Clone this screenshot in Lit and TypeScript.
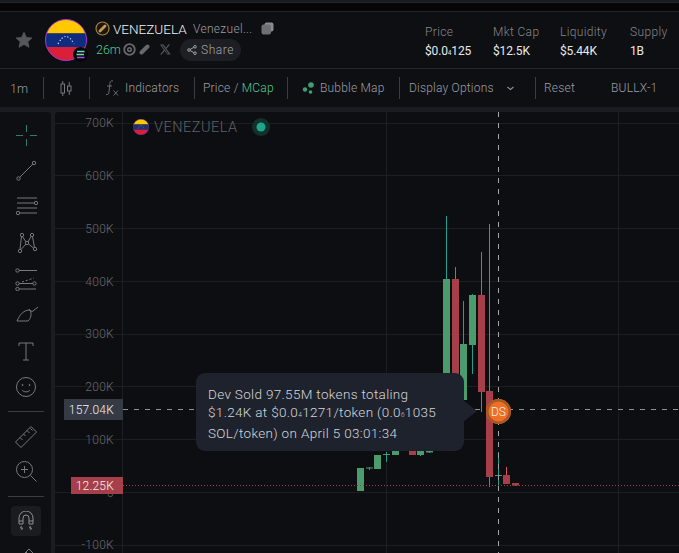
import { LitElement, html, css, svg } from "lit";
import { customElement } from "lit/decorators.js";

const GRID_Y = [123.5, 175.5, 228.5, 281.5, 334.5, 386.5, 439.5, 492.5, 545.5];
const GRID_X = [122.5, 386.5, 618.5];
const LABELS: [string, number][] = [["700K", 122], ["600K", 175], ["500K", 228], ["400K", 281], ["300K", 333], ["200K", 386], ["100K", 439], ["0", 492], ["-100K", 544]];
// x, top, bottom, wickTop, wickBottom, up
const CANDLES: [number, number, number, number, number, boolean][] = [
  [357, 468, 491, 468, 491, true],
  [366, 467.5, 468.5, 467, 470, true],
  [374, 455, 469, 455, 469, true],
  [383, 454, 455, 452, 462, true],
  [392, 450, 455, 449, 455, true],
  [409, 451, 455, 450, 455, false],
  [417, 451, 455, 450, 456, true],
  [426, 450, 452.5, 450, 453, true],
  [443, 279, 450, 216, 451, true],
  [452, 279, 450, 267, 451, false],
  [460, 344, 400, 301, 402, true],
  [469, 295, 345, 294, 374, true],
  [478, 295, 392, 252, 412, false],
  [486, 391, 477, 224, 487, false],
  [495, 475, 476, 452, 486, true],
  [503, 475, 484, 467, 484, false],
  [512, 483, 485.5, 483, 486, false],
];

const IC = "#77797e";

@customElement("app-root")
export class AppRoot extends LitElement {
  static styles = css`
    :host { display: block; width: 679px; height: 553px; overflow: hidden; background: #1b1c21; font-family: Roboto, "Liberation Sans", sans-serif; font-weight: 300; color: #a9abb0; font-size: 12px; }
    .strip { height: 8px; margin-top: 2px; background: #060608; border-top: 1px solid #25262b; border-bottom: 1px solid #25262b; }
    .head { height: 56px; background: #0e0f12; border-bottom: 1px solid #25262b; display: flex; align-items: center; }
    .star { width: 45px; display: flex; justify-content: center; padding-left: 3px; box-sizing: border-box; }
    .avatar { position: relative; width: 42px; height: 42px; margin-right: 8px; }
    .sol { position: absolute; right: -1px; bottom: -1px; width: 15px; height: 15px; }
    .info { width: 330px; display: flex; flex-direction: column; gap: 1px; }
    .r1, .r2 { display: flex; align-items: center; }
    .r1 { height: 18px; }
    .r2 { height: 22px; }
    .sym { color: #f2f3f4; font-size: 13.5px; margin: 0 5px 0 3px; width: 75px; white-space: nowrap; }
    .nm { color: #9b9da2; font-size: 12px; letter-spacing: .3px; width: 68px; white-space: nowrap; }
    .age { color: #55c98d; font-size: 12.5px; margin: 0 4px 0 1px; width: 23px; }
    .share { margin-left: 9px; height: 22px; width: 61px; border-radius: 11px; background: #1d1f24; display: flex; align-items: center; justify-content: center; gap: 4px; color: #a2a4a8; font-size: 12px; letter-spacing: .5px; }
    .stats { display: grid; grid-template-columns: 68px 67px 70px auto; row-gap: 5px; padding-top: 4px; }
    .stats span { font-size: 12px; letter-spacing: .35px; color: #85878c; line-height: 14px; }
    .stats b { font-weight: 400; font-size: 12px; letter-spacing: -.15px; color: #e8e9ea; line-height: 14px; }
    small { font-size: 6.5px; }
    .tools { height: 38px; background: #0e0f12; display: grid; grid-template-columns: 43px 46px 105px 93px 112px 136px 144px; align-items: center; color: #9c9ea3; font-size: 12px; letter-spacing: .2px; }
    .cell { height: 22px; display: flex; align-items: center; border-left: 1px solid #3a3c42; box-sizing: border-box; white-space: nowrap; }
    .cell:first-child { border: 0; padding-left: 10px; font-size: 12.5px; letter-spacing: 0; }
    .c2 { padding-left: 16px; }
    .c3 { padding-left: 15px; gap: 6px; }
    .c4 { padding-left: 8px; }
    .c5 { padding-left: 14px; gap: 5px; }
    .c6 { padding-left: 9px; }
    .c7 { padding-left: 8px; }
    .c6 svg { margin-left: 13px; }
    .c7 span { margin-left: 36px; }
    .mcap { color: #55c98d; }
    .main { display: flex; gap: 4px; height: 441px; margin-top: 5px; }
    .side { width: 51px; flex: none; background: #0e0f12; overflow: hidden; padding-top: 5px; box-sizing: border-box; border-radius: 0 4px 0 0; display: flex; flex-direction: column; align-items: center; }
    .btn { height: 36px; width: 36px; flex: none; display: flex; align-items: center; justify-content: center; }
    .btn.tight { height: 34px; }
    .sep { width: 36px; height: 1px; flex: none; background: #3b3d42; margin-top: 6px; margin-bottom: 8px; }
    .sep.b { margin-top: 8px; margin-bottom: 9px; }
    .btn.mag { width: 30px; height: 30px; border-radius: 4px; background: #1a1c20; }
    .chart { position: relative; flex: 1; background: #0d0e11; overflow: hidden; border-radius: 4px 0 0 0; }
    .plot { position: absolute; left: -55px; top: -112px; width: 679px; height: 553px; }
    .ax { position: absolute; right: 565px; font-size: 12px; letter-spacing: .3px; color: #66686e; line-height: 14px; transform: translateY(-6px); }
    .tag { position: absolute; height: 17px; display: flex; align-items: center; justify-content: flex-end; padding-right: 9px; box-sizing: border-box; color: #f2f3f4; font-size: 12px; letter-spacing: .2px; }
    .tag.cur { left: 9px; top: 287px; width: 59px; height: 21px; background: #363a45; }
    .tag.low { left: 16px; top: 365px; width: 52px; background: #a63f49; }
    .legend { position: absolute; left: 78px; top: 6px; display: flex; align-items: center; color: #5f6168; font-size: 14.5px; letter-spacing: .5px; }
    .legend svg { margin-right: 5px; }
    .legend .dot { margin: 0 0 0 14px; }
    .tip { position: absolute; left: 141px; top: 261px; width: 268px; height: 78px; box-sizing: border-box; padding: 12px 12px; border-radius: 9px; background: #1e222d; color: #d4d6da; font-size: 13.5px; line-height: 18px; letter-spacing: .33px; white-space: nowrap; }
    .tip::after { content: ""; position: absolute; left: 267px; top: 27px; border-style: solid; border-width: 11px 0 11px 14px; border-color: transparent transparent transparent #1e222d; }
    .ds { position: absolute; left: 431px; top: 287px; width: 25px; height: 25px; border-radius: 50%; background: #ee6f28; box-shadow: inset 0 0 0 2.5px #a8571f; display: flex; align-items: center; justify-content: center; color: #f7efe9; font-size: 12px; }
  `;

  private flag(size: number, bar = "#0f2c80") {
    return html`<svg width=${size} height=${size} viewBox="0 0 42 42">
      <defs><clipPath id="fc"><circle cx="21" cy="21" r="20.5"/></clipPath></defs>
      <g clip-path="url(#fc)">
        <rect width="42" height="14.5" fill="#ffc800"/>
        <rect y="14.5" width="42" height="14" fill=${bar}/>
        <rect y="28" width="42" height="14" fill="#d91f3a"/>
      </g>
      <path d="M13 25 Q21 10 29 25" fill="none" stroke="#dfe3ee" stroke-width="1.2" stroke-dasharray="1.2 2"/>
      <circle cx="21" cy="21" r="20.5" fill="none" stroke="#a03ad0" stroke-width="1"/>
    </svg>`;
  }

  private chartSvg() {
    return svg`
      ${GRID_Y.map((y) => svg`<line x1="55" x2="679" y1=${y} y2=${y} stroke="#1d1e22"/>`)}
      ${GRID_X.map((x) => svg`<line x1=${x} x2=${x} y1="112" y2="553" stroke="#1d1e22"/>`)}
      ${CANDLES.map(([x, t, b, wt, wb, up]) => svg`
        <line x1=${x + 3.5} x2=${x + 3.5} y1=${wt} y2=${wb} stroke=${up ? "#1f9f8d" : "#d9534f"}/>
        <rect x=${x} y=${t} width="7" height=${b - t} fill=${up ? "#4a9c6d" : "#a63f49"}/>`)}
      <line x1="123" x2="679" y1="485.5" y2="485.5" stroke="#a63f49" stroke-dasharray="1 2"/>
      <line x1="123" x2="679" y1="409.5" y2="409.5" stroke="#8f9298" stroke-dasharray="5 6"/>
      <line x1="498.5" x2="498.5" y1="112" y2="553" stroke="#a4a6ab" stroke-dasharray="5 6"/>
    `;
  }

  render() {
    const sideIcons = [
      html`<svg width="24" height="24" viewBox="0 0 24 24" stroke="#2f7f63" fill="none"><path d="M12.500 2v7M12.500 16v7M2 12.500h7M16 12.500h7"/></svg>`,
      html`<svg width="24" height="24" viewBox="0 0 24 24" stroke=${IC} fill="none"><circle cx="4.500" cy="19.500" r="1.700"/><circle cx="20" cy="4" r="1.700"/><path d="M5.700 18.300 18.800 5.200"/></svg>`,
      html`<svg width="24" height="24" viewBox="0 0 24 24" stroke=${IC} fill="none"><path d="M3 3h20M3 8h18M3 13h20M6 18h17"/><circle cx="22" cy="8" r="1.700"/><circle cx="4" cy="18" r="1.700"/></svg>`,
      html`<svg width="24" height="24" viewBox="0 0 24 24" stroke=${IC} fill="none"><circle cx="8" cy="4" r="1.700"/><circle cx="18" cy="4" r="1.700"/><circle cx="13" cy="12" r="1.700"/><circle cx="6" cy="20" r="1.700"/><circle cx="21" cy="18" r="1.700"/><path d="M8.500 5.500 12 11M17 5.500 14 11M7 18.500 12 13M19.500 17 14.500 13M7.500 5.500 6 18M18.500 5.500 20.500 16.500"/></svg>`,
      html`<svg width="24" height="24" viewBox="0 0 24 24" stroke=${IC} fill="none"><path d="M5 3.500h18M5 16.500h14M5 22h17"/><path d="M8 15l12-4" stroke-dasharray="2 2"/><circle cx="3.500" cy="3.500" r="1.700"/><circle cx="3.500" cy="16.500" r="1.700"/><circle cx="3.500" cy="22" r="1.700"/><circle cx="20.500" cy="16.500" r="1.700"/></svg>`,
      html`<svg width="24" height="24" viewBox="0 0 24 24" stroke=${IC} fill="none"><path d="M3 18 L14 18 C17 15 18 11 16 7 C10 7 6 11 3 18zM15 6C16 8 18 9 19 8L24 4"/></svg>`,
      html`<svg width="24" height="24" viewBox="0 0 24 24" stroke=${IC} fill="none"><path d="M5 7V4h14v3M12 4v17M9 21h6"/></svg>`,
      html`<svg width="24" height="24" viewBox="0 0 24 24" stroke=${IC} fill="none"><circle cx="12" cy="12" r="9.500"/><circle cx="8.500" cy="10" r=".6"/><circle cx="15.500" cy="10" r=".6"/><path d="M8 15c2 2.500 6 2.500 8 0"/></svg>`,
    ];
    return html`
      <div class="strip"></div>
      <div class="head">
        <div class="star"><svg width="18" height="18" viewBox="0 0 24 24" fill="#55575c" stroke="#55575c" stroke-linejoin="round"><path d="M12 1.500l3.200 7 7.500.8-5.600 5 1.600 7.500L12 18l-6.700 3.800 1.600-7.500-5.600-5 7.500-.8z"/></svg></div>
        <div class="avatar">
          ${this.flag(42)}
          <svg class="sol" viewBox="0 0 15 15"><circle cx="7.500" cy="7.500" r="7.500" fill="#07070a"/><path d="M4 4.500h7.500M3.500 7.500H11" stroke="#6fd6b8" stroke-width="1.500"/><path d="M4 10.500h7.500" stroke="#a04fe8" stroke-width="1.500"/></svg>
        </div>
        <div class="info">
          <div class="r1">
            <svg width="15" height="15" viewBox="0 0 15 15"><circle cx="7.500" cy="7.500" r="6.500" fill="#1c160c" stroke="#a8823f" stroke-width="1.200"/><path d="M5 10l5-5" stroke="#c49a50" stroke-width="2.800" stroke-linecap="round"/></svg>
            <span class="sym">VENEZUELA</span>
            <span class="nm">Venezuel...</span>
            <svg width="13" height="13" viewBox="0 0 13 13" fill="#6d6f74"><rect x="3.500" y="0.500" width="9" height="9" rx="2" fill="#8a8c90"/><rect x="0.500" y="2.500" width="9.500" height="10" rx="2"/></svg>
          </div>
          <div class="r2">
            <span class="age">26m</span>
            <svg width="13" height="13" viewBox="0 0 13 13" fill="none" stroke="#66686d"><circle cx="6.500" cy="6.500" r="5.300" stroke-width="1.800"/><circle cx="6.500" cy="6.500" r="1.800" stroke-width="1.500"/></svg>
            <svg style="margin-left:3px" width="11" height="11" viewBox="0 0 11 11"><path d="M2.500 8.500l6-6" stroke="#66686d" stroke-width="4" stroke-linecap="round"/></svg>
            <svg style="margin-left:10px" width="11" height="11" viewBox="0 0 24 24" fill="#55575c"><path d="M18 1h4l-8 9.500L23.500 23H16l-5.800-7.600L3.500 23H0l8.500-10L0 1h7.700l5.200 7zM16.700 21h2L6.300 3H4.200z"/></svg>
            <div class="share">
              <svg width="10" height="10" viewBox="0 0 10 10" fill="none" stroke="#a2a4a8"><circle cx="2" cy="5" r="1.300"/><circle cx="8" cy="1.800" r="1.300"/><circle cx="8" cy="8.200" r="1.300"/><path d="M3.200 4.400 6.800 2.400M3.200 5.600l3.600 2"/></svg>
              Share
            </div>
          </div>
        </div>
        <div class="stats">
          <span>Price</span><span>Mkt Cap</span><span>Liquidity</span><span>Supply</span>
          <b>$0.0<small>4</small>125</b><b>$12.5K</b><b>$5.44K</b><b>1B</b>
        </div>
      </div>
      <div class="tools">
        <div class="cell">1m</div>
        <div class="cell c2"><svg width="12" height="15" viewBox="0 0 12 15" fill="none" stroke=${IC}><rect x="1" y="3" width="3.500" height="9"/><path d="M2.750 0v3M2.750 12v3"/><rect x="7.500" y="5" width="3.500" height="5"/><path d="M9.250 1v4M9.250 10v4"/></svg></div>
        <div class="cell c3"><svg width="14" height="16" viewBox="0 0 14 16" fill="none" stroke="#6a6c72"><path d="M8 1C5 0 5 3 4.800 5L4 12c-.2 2-1.500 3-3 2.500M2 6h5M8.500 10.500l4.500 5M13 10.500l-4.500 5"/></svg><span>Indicators</span></div>
        <div class="cell c4">Price /&nbsp;<span class="mcap">MCap</span></div>
        <div class="cell c5"><svg width="13" height="12" viewBox="0 0 13 12" fill="#3f9f74"><circle cx="3" cy="7.500" r="2.200"/><circle cx="9" cy="3" r="2.800"/><circle cx="8.500" cy="10" r="1.800"/></svg><span>Bubble Map</span></div>
        <div class="cell c6">Display Options<svg width="7" height="5" viewBox="0 0 7 5" fill="none" stroke="#8c8e93" stroke-width="1.200"><path d="M.5 1l3 2.500 3-2.500"/></svg></div>
        <div class="cell c7">Reset<span>BULLX-1</span></div>
      </div>
      <div class="main">
        <div class="side">
          ${sideIcons.map((i) => html`<div class="btn">${i}</div>`)}
          <div class="sep"></div>
          <div class="btn tight"><svg width="24" height="24" viewBox="0 0 24 24" stroke=${IC} fill="none"><path d="M1.500 17 17 1.500 22.500 7 7 22.500zM6 12.500l2.500 2.500M9.500 9l2 2M13 5.500l2.500 2.500M16.500 3.500l2 2"/></svg></div>
          <div class="btn tight"><svg width="24" height="24" viewBox="0 0 24 24" stroke=${IC} fill="none"><circle cx="10.500" cy="10.500" r="8"/><path d="M16.500 16.500l6 6M10.500 7v7M7 10.500h7"/></svg></div>
          <div class="sep b"></div>
          <div class="btn mag"><svg width="16" height="20" viewBox="0 0 16 20" stroke="#8c8e93" fill="none"><path d="M1 13V7a7 7 0 0 1 14 0v6h-4V7a3 3 0 0 0-6 0v6zM1 10h4M11 10h4"/><path d="M3.500 15l-1 2h2l-1 2M12.500 15l-1 2h2l-1 2"/></svg></div>
          <div class="btn"><svg width="24" height="24" viewBox="0 0 24 24" stroke=${IC} fill="none"><path d="M5 17 15 7l5 5-10 10zM9 13l5 5M12 10l5 5"/></svg></div>
        </div>
        <div class="chart">
          <svg class="plot" viewBox="0 0 679 553">${this.chartSvg()}</svg>
          ${LABELS.map(([t, y]) => html`<span class="ax" style="top:${y - 112}px">${t}</span>`)}
          <div class="tag cur">157.04K</div>
          <div class="tag low">12.25K</div>
          <div class="legend">
            ${this.flag(16, "#1f2f70")}
            <span>VENEZUELA</span>
            <svg class="dot" width="18" height="18" viewBox="0 0 18 18"><circle cx="9" cy="9" r="9" fill="#12302c"/><circle cx="9" cy="9" r="4.500" fill="#1fa58a"/></svg>
          </div>
          <div class="tip">Dev Sold 97.55M tokens totaling<br>$1.24K at $0.0<small>4</small>1271/token (0.0<small>6</small>1035<br>SOL/token) on April 5 03:01:34</div>
          <div class="ds">DS</div>
        </div>
      </div>
    `;
  }
}
